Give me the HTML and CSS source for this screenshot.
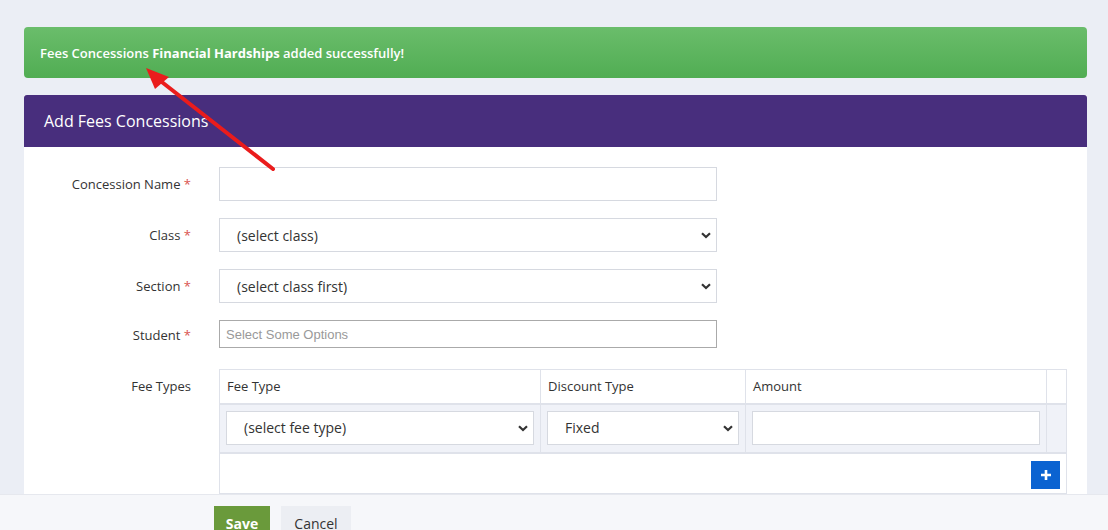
FILE: index.html
```html
<!DOCTYPE html>
<html>
<head>
<meta charset="utf-8">
<link rel="stylesheet" href="styles.css">
</head>
<body>
<div class="page">
  <div class="alert"><span>Fees Concessions <b>Financial Hardships</b> added successfully!</span></div>
  <div class="card">
    <div class="card-head">Add Fees Concessions</div>
    <div class="card-body">
      <div class="row">
        <label class="lbl">Concession Name <span class="req">*</span></label>
        <input class="ctl" type="text">
      </div>
      <div class="row">
        <label class="lbl">Class <span class="req">*</span></label>
        <div class="sel-wrap">
          <select class="ctl sel"><option>(select class)</option></select>
          <svg class="chev" viewBox="0 0 10 7" width="10" height="7"><path d="M1 1.2 L5 5 L9 1.2" fill="none" stroke="#333" stroke-width="2.2"/></svg>
        </div>
      </div>
      <div class="row">
        <label class="lbl">Section <span class="req">*</span></label>
        <div class="sel-wrap">
          <select class="ctl sel"><option>(select class first)</option></select>
          <svg class="chev" viewBox="0 0 10 7" width="10" height="7"><path d="M1 1.2 L5 5 L9 1.2" fill="none" stroke="#333" stroke-width="2.2"/></svg>
        </div>
      </div>
      <div class="row student">
        <label class="lbl">Student <span class="req">*</span></label>
        <input class="ctl chosen" type="text" placeholder="Select Some Options">
      </div>
      <div class="row top">
        <label class="lbl">Fee Types</label>
        <table class="fees">
          <thead>
            <tr><th class="c1">Fee Type</th><th class="c2">Discount Type</th><th class="c3">Amount</th><th class="c4"></th></tr>
          </thead>
          <tbody>
            <tr class="item">
              <td><div class="sel-wrap"><select class="ctl sel"><option>(select fee type)</option></select><svg class="chev" viewBox="0 0 10 7" width="10" height="7"><path d="M1 1.2 L5 5 L9 1.2" fill="none" stroke="#333" stroke-width="2.2"/></svg></div></td>
              <td><div class="sel-wrap"><select class="ctl sel"><option>Fixed</option></select><svg class="chev" viewBox="0 0 10 7" width="10" height="7"><path d="M1 1.2 L5 5 L9 1.2" fill="none" stroke="#333" stroke-width="2.2"/></svg></div></td>
              <td><input class="ctl" type="text"></td>
              <td></td>
            </tr>
            <tr class="add">
              <td colspan="4"><div class="add-cell"><button class="plus" type="button"><svg viewBox="0 0 12 12" width="12" height="12"><path d="M6 1 V11 M1 6 H11" stroke="#fff" stroke-width="2.6"/></svg></button></div></td>
            </tr>
          </tbody>
        </table>
      </div>
    </div>
  </div>
</div>
<div class="footer">
  <button class="btn save" type="button">Save</button>
  <button class="btn cancel" type="button">Cancel</button>
</div>
<svg class="arrow" width="1108" height="530" viewBox="0 0 1108 530">
  <line x1="273" y1="169" x2="158" y2="79" stroke="#ea1c1c" stroke-width="4" stroke-linecap="round"/>
  <polygon points="146,68 169,77 155,89" fill="#ea1c1c"/>
</svg>
</body>
</html>
```
FILE: styles.css
```css
html, body {
  margin: 0;
  padding: 0;
  overflow: hidden;
  height: 530px;
}
body {
  background: #ebeef5;
  font-family: "Open Sans", "Noto Sans", sans-serif;
  color: #333;
  position: relative;
}
.page {
  padding: 27px 21px 0 24px;
}
.alert {
  height: 51px;
  box-sizing: border-box;
  display: flex;
  align-items: center;
  padding-left: 16px;
  border-radius: 4px;
  background: linear-gradient(#6abd6b, #51ad53);
  color: #fff;
  font-size: 13px;
  font-weight: 600;
}
.alert b { font-weight: 700; }
.card {
  margin-top: 17px;
  background: #fff;
}
.card-head {
  height: 52px;
  box-sizing: border-box;
  background: #482e7d;
  color: #fff;
  font-size: 16px;
  display: flex;
  align-items: center;
  padding-left: 20px;
  border-radius: 3px 3px 0 0;
}
.card-body {
  padding: 20px 0 0 0;
}
.row {
  display: grid;
  grid-template-columns: 167px auto;
  column-gap: 28px;
  align-items: center;
  margin-bottom: 17px;
  justify-content: start;
}
.row.student {
  margin-bottom: 21px;
}
.row.student .lbl {
  line-height: 28px;
  position: relative;
  top: 1px;
}
.row.top {
  align-items: start;
  margin-bottom: 0;
}
.lbl {
  text-align: right;
  font-size: 13px;
  color: #333;
  line-height: 34px;
}
.req { color: #d9534f; }
.ctl {
  box-sizing: border-box;
  width: 498px;
  height: 34px;
  border: 1px solid #d6d9e0;
  background: #fff;
  font-family: "Open Sans", "Noto Sans", sans-serif;
  font-size: 14px;
  color: #333;
  margin: 0;
  border-radius: 0;
  outline: none;
}
.sel {
  appearance: none;
  -webkit-appearance: none;
  padding-left: 17px;
}
.sel-wrap {
  position: relative;
  width: 498px;
}
.chev {
  position: absolute;
  right: 6px;
  top: 14px;
  pointer-events: none;
}
.chosen {
  height: 28px;
  border: 1px solid #aaa;
  font-family: "Liberation Sans", Arial, sans-serif;
  font-size: 13px;
  padding-left: 6px;
}
.chosen::placeholder { color: #999; }
.fees {
  border-collapse: collapse;
  width: 848px;
  font-size: 13px;
}
.fees th {
  height: 34px;
  box-sizing: border-box;
  text-align: left;
  font-weight: 400;
  padding: 0 7px;
  border: 1px solid #dfe2ea;
  color: #333;
}
.fees th.c1 { width: 321px; }
.fees th.c2 { width: 205px; }
.fees th.c3 { width: 301px; }
.fees th.c4 { width: 20px; }
.fees tr.item td {
  background: #f0f2f8;
  border: 1px solid #dfe2ea;
  border-top: 2px solid #dfe2ea;
  padding: 6px 6px 7px 6px;
  height: 34px;
}
.fees tr.item .sel-wrap,
.fees tr.item .ctl { width: 100%; }
.fees tr.add td {
  border: 1px solid #dfe2ea;
  border-top: 2px solid #dfe2ea;
  height: 39px;
  padding: 0;
  background: #fff;
}
.add-cell {
  display: flex;
  justify-content: flex-end;
  padding-right: 6px;
}
.plus {
  width: 29px;
  height: 28px;
  border: 0;
  background: #0b63d1;
  display: flex;
  align-items: center;
  justify-content: center;
  padding: 0;
  margin-top: 4px;
}
.footer {
  border-top: 1px solid #e6e8ee;
  background: #f6f7fa;
  height: 60px;
  padding: 11px 0 0 214px;
  display: flex;
  gap: 11px;
  align-items: flex-start;
}
.btn {
  height: 36px;
  border: 0;
  font-family: "Open Sans", "Noto Sans", sans-serif;
  font-size: 14px;
  display: flex;
  justify-content: center;
  align-items: flex-start;
  padding: 8px 0 0 0;
  box-sizing: border-box;
  line-height: 20px;
}
.save {
  width: 56px;
  background: #6a9a3b;
  color: #fff;
  font-weight: 700;
}
.cancel {
  width: 70px;
  background: #eceef3;
  color: #333;
}
.arrow {
  position: absolute;
  left: 0;
  top: 0;
  pointer-events: none;
}
```
